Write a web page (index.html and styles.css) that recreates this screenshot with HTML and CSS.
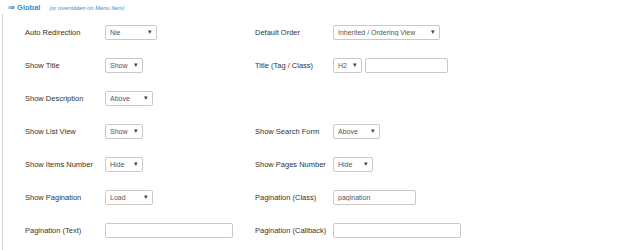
FILE: index.html
```html
<html>
	<head>
		<link rel="stylesheet" href="styles.css">
	</head>
	<body>
		<div class="legend">
			<span class="legend-title">&rArr; Global</span>
			<span class="legend-note">(or overridden on Menu Item)</span>
		</div>
		<div class="panel">
			<div class="row">
				<label>Auto Redirection</label>
				<div class="select w52"><select><option>Nie</option></select></div>
				<label>Default Order</label>
				<div class="select w107"><select><option>Inherited / Ordering View</option></select></div>
			</div>
			<div class="row">
				<label>Show Title</label>
				<div class="select w38"><select><option>Show</option></select></div>
				<label>Title (Tag / Class)</label>
				<div class="pair">
					<div class="select w29"><select><option>H2</option></select></div>
					<input type="text" class="w83">
				</div>
			</div>
			<div class="row">
				<label>Show Description</label>
				<div class="select w48"><select><option>Above</option></select></div>
			</div>
			<div class="row">
				<label>Show List View</label>
				<div class="select w38"><select><option>Show</option></select></div>
				<label>Show Search Form</label>
				<div class="select w47"><select><option>Above</option></select></div>
			</div>
			<div class="row">
				<label>Show Items Number</label>
				<div class="select w38"><select><option>Hide</option></select></div>
				<label>Show Pages Number</label>
				<div class="select w40"><select><option>Hide</option></select></div>
			</div>
			<div class="row">
				<label>Show Pagination</label>
				<div class="select w48"><select><option>Load</option></select></div>
				<label>Pagination (Class)</label>
				<input type="text" class="w83" value="pagination">
			</div>
			<div class="row">
				<label>Pagination (Text)</label>
				<input type="text" class="w128">
				<label>Pagination (Callback)</label>
				<input type="text" class="w128">
			</div>
		</div>
	</body>
</html>
```

FILE: styles.css
```css
body {
	margin: 0;
	background-color: #fff;
	font-family: "Liberation Sans", Arial, sans-serif;
	color: #333;
}

.legend {
	display: flex;
	align-items: baseline;
	gap: 9px;
	padding: 3px 0 0 8px;
	height: 11px;
	color: #2f8fd0;
}

.legend-title {
	font-size: 7.5px;
	font-weight: bold;
}

.legend-note {
	font-size: 5.8px;
	font-style: italic;
}

.panel {
	margin-left: 2px;
	border-left: 1px solid #d6d6d6;
	padding: 11px 0 0 22px;
	height: 236px;
	display: flex;
	flex-direction: column;
	gap: 18px;
	box-sizing: border-box;
}

.row {
	display: grid;
	grid-template-columns: 80px 150px 78px 1fr;
	align-items: center;
	height: 15px;
}

label {
	font-size: 7.5px;
	color: #333;
}

.pair {
	display: flex;
	gap: 3px;
}

.select {
	position: relative;
}

.select select,
input {
	display: block;
	width: 100%;
	height: 15px;
	box-sizing: border-box;
	border: 1px solid #c9c9c9;
	border-radius: 2px;
	background-color: #fff;
	font-family: "Liberation Sans", Arial, sans-serif;
	font-size: 7px;
	color: #555;
	padding: 0 0 0 4px;
	outline: none;
	appearance: none;
	-webkit-appearance: none;
}

.select::after {
	content: "\25BE";
	position: absolute;
	right: 5px;
	top: 3px;
	font-size: 7px;
	color: #444;
	pointer-events: none;
}

.w29 { width: 29px; }
.w38 { width: 38px; }
.w40 { width: 40px; }
.w47 { width: 47px; }
.w48 { width: 48px; }
.w52 { width: 52px; }
.w83 { width: 83px; }
.w107 { width: 107px; }
.w128 { width: 128px; }
```
